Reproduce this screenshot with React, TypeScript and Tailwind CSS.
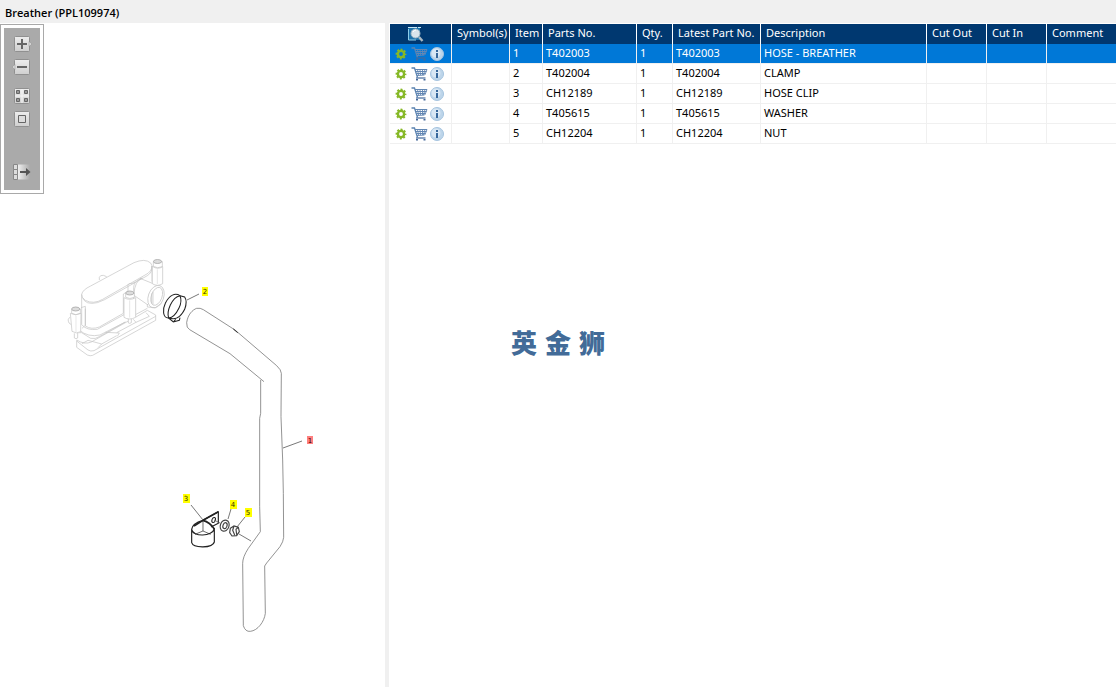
import React from "react";

type Part = { item: number; partNo: string; qty: number; latest: string; description: string };

const parts: Part[] = [
  { item: 1, partNo: "T402003", qty: 1, latest: "T402003", description: "HOSE - BREATHER" },
  { item: 2, partNo: "T402004", qty: 1, latest: "T402004", description: "CLAMP" },
  { item: 3, partNo: "CH12189", qty: 1, latest: "CH12189", description: "HOSE CLIP" },
  { item: 4, partNo: "T405615", qty: 1, latest: "T405615", description: "WASHER" },
  { item: 5, partNo: "CH12204", qty: 1, latest: "CH12204", description: "NUT" },
];

const headings = ["Symbol(s)", "Item", "Parts No.", "Qty.", "Latest Part No.", "Description", "Cut Out", "Cut In", "Comment"];

function ToolIcon({ children }: { children: React.ReactNode }) {
  return (
    <svg viewBox="0 0 20 18" className="block h-[18px] w-5" aria-hidden="true">
      <defs>
        <linearGradient id="face" x1="0" y1="0" x2="0" y2="1">
          <stop offset="0" stopColor="#ededed" />
          <stop offset="1" stopColor="#cfcfcf" />
        </linearGradient>
        <linearGradient id="fade" x1="0" y1="0" x2="1" y2="0">
          <stop offset="0" stopColor="#efefef" />
          <stop offset="1" stopColor="#aaaaaa" />
        </linearGradient>
      </defs>
      {children}
    </svg>
  );
}

const Face = () => <rect x="2.5" y="1.5" width="15" height="15" rx="1" fill="url(#face)" stroke="#909090" />;

function ToolButton({ label, children }: { label: string; children: React.ReactNode }) {
  return (
    <button type="button" aria-label={label} className="block">
      <ToolIcon>{children}</ToolIcon>
    </button>
  );
}

function Toolbar() {
  return (
    <div className="absolute top-px left-0 border border-[#a9a9a9] bg-white p-[3px]">
      <div className="flex flex-col items-center bg-[#aaaaaa] px-2 pt-[7px] pb-[9px]">
        <div className="flex flex-col gap-[5px]">
          <ToolButton label="Zoom in">
            <Face />
            <path d="M17 6.5 20 9l-3 2.500z" fill="#dedede" stroke="#888" strokeWidth=".5" />
            <path d="M10 4v10M5 9h10" stroke="#666" strokeWidth="2" />
          </ToolButton>
          <ToolButton label="Zoom out">
            <Face />
            <path d="M3 6.500 0 9l3 2.500z" fill="#dedede" stroke="#888" strokeWidth=".5" />
            <path d="M5 9h10" stroke="#666" strokeWidth="2" />
          </ToolButton>
        </div>
        <div className="mt-[11px] flex flex-col gap-[5px]">
          <ToolButton label="Show tiles">
            <Face />
            <path d="M10 2v14M3 9h14" stroke="#f5f5f5" strokeWidth="1" />
            <path d="M4.500 3.500h3v3h-3zM12.500 3.500h3v3h-3zM4.500 11.500h3v3h-3zM12.500 11.500h3v3h-3z" fill="#999" stroke="#666" />
          </ToolButton>
          <ToolButton label="Fit to window">
            <Face />
            <path d="M6.500 5.500h7v7h-7z" fill="#ddd" stroke="#666" />
          </ToolButton>
        </div>
        <div className="mt-[35px]">
          <ToolButton label="Hide list">
            <path d="M6 1.500h12v15H6z" fill="url(#fade)" />
            <path d="M1.500 1.500h4v5h-4zM1.500 6.500h4v5h-4zM1.500 11.500h4v5h-4z" fill="#ddd" stroke="#888" />
            <path d="M8 9h8" stroke="#555" strokeWidth="2" />
            <path d="m14 5 4.500 4-4.500 4z" fill="#555" />
          </ToolButton>
        </div>
      </div>
    </div>
  );
}

function Callout({ x, y, n, selected }: { x: number; y: number; n: number; selected?: boolean }) {
  return (
    <g>
      <rect x={x} y={y} width={n < 3 ? 6 : 7} height={n === 1 ? 8 : 9} fill={selected ? "#ff7f7f" : "#ffff00"} />
      <text x={x + 3} y={y + 7} textAnchor="middle" fontSize="7" fontFamily="DejaVu Sans, sans-serif" fill={selected ? "#300" : "#333300"}>
        {n}
      </text>
    </g>
  );
}

function Drawing() {
  return (
    <svg viewBox="0 23 385 664" className="block w-full" role="img" aria-label="Breather exploded view" fill="none">
      {/* breather housing */}
      <g transform="translate(60 250) scale(.33333)" stroke="#c4c4c4" strokeWidth="2.100" strokeLinejoin="round">
        <path d="M65 133Q68 119 92 108L222 38Q255 24 272 39Q283 54 264 70L128 148Q100 164 76 151Q64 144 65 133V224" />
        <path d="M68 143Q76 166 112 158L134 149 262 77Q277 68 276 48V95" />
        <path d="M76 176V228Q94 240 118 231L190 190" />
        <path d="M65 224Q80 242 112 238L192 194M57 240Q85 263 120 255L196 216" />
        <path d="M118 90V82Q120 75 130 76L140 80" />
        <path d="M204 103V125M190 132V190M190 132L204 124M206 101Q218 102 226 96M221 148V112Q222 96 236 89L248 84" />
        <path d="M240 85 292 106M222 136 264 165M246 84Q224 94 222 132" />
        <ellipse cx="288" cy="140" rx="23" ry="35" transform="rotate(20 288 140)" fill="white" />
        <ellipse cx="290" cy="139" rx="16" ry="28" transform="rotate(20 290 139)" />
        <path d="M275 130V160M279 125V164M262 162V171L286 173 304 160" />
        {/* mounting plate */}
        <path d="M228 201 262 181 287 195V211L98 316Q91 319 82 315L50 292V271M50 273 84 300Q92 305 102 302L287 199M66 281 84 271 125 282 114 293M125 282 170 257M136 247 178 249 172 259M170 248 228 217 220 208M228 217 268 199 258 188" />
        <path d="M50 270Q74 285 94 276L205 213M36 240Q50 252 65 248L92 265Q106 268 118 260L196 216M30 202Q21 207 27 219L34 224" />
        <path d="M63 173 76 169V226L66 235M228 193 262 175M218 190 228 196" />
        {/* bolts */}
        <path d="M280 35V49Q292 57 307 50V35Q292 27 280 35Q292 43 307 35M277 49V101Q292 111 308 101V50Q293 60 277 49" fill="white" />
        <path d="M197 129V142Q209 149 223 142V129Q209 120 197 129Q209 137 223 129M192 143V202Q208 212 227 202V143Q209 153 192 143M205 207V219Q209 222 214 218V207" fill="white" />
        <path d="M35 177V190Q47 198 61 190V177Q47 167 35 177Q47 186 61 177M31 190 36 244Q49 253 62 245L63 190Q48 199 31 190M43 250V264Q48 268 53 264V249" fill="white" />
        <path d="M292 58V102M209 151V203M48 198V246M290 29V34M209 123V128" stroke="#dddddd" />
      </g>
      <g stroke="#aaaaaa" fill="#dddddd" strokeWidth=".8">
        <ellipse cx="157.500" cy="261.500" rx="4" ry="2" />
        <ellipse cx="129.800" cy="293" rx="4" ry="2" />
        <ellipse cx="75.700" cy="309" rx="4" ry="2" />
      </g>

      {/* clamp */}
      <g transform="translate(60 250) scale(.33333)" stroke="#222" strokeWidth="3.200">
        <path d="M326 204C308 205 307 178 316 160C328 134 346 128 360 137L374 141Q383 154 374 178C363 201 345 211 326 204" />
        <path d="M326 204C319 185 335 142 360 137Q367 153 357 174C347 195 337 203 326 204M326 204 340 216 358 211 360 203M340 216 347 208" />
      </g>

      {/* hose */}
      <g transform="translate(175 280) scale(.33333)" stroke="#777" strokeWidth="2.400">
        <path d="M267 305 165 221 44 149Q34 144 35 128C38 104 53 89 65 85Q76 83 85 89L180 150 305 257Q319 270 319 280L318 410 323 540M257 300V400L254 415V540" />
        <path d="M175 147 188 158" stroke="#222" strokeWidth="3" />
      </g>
      <g transform="translate(220 430) scale(.33333)" stroke="#777" strokeWidth="2.400">
        <path d="M119 90 119 230 121 305 85 355Q68 381 68 400L70 587Q76 606 91 604C113 602 133 575 136 550L134 408 140 399 180 350Q190 335 191 322L190 190 188 90" />
      </g>

      {/* hose clip, washer and nut */}
      <g transform="translate(170 480) scale(.33333)">
        <g stroke="#222" strokeWidth="3.500" strokeLinejoin="round">
          <path d="M65 148V188C70 205 128 205 133 186V146C128 170 68 172 65 148C66 135 79 127 99 121L145 95V130L123 141" />
          <path d="M99 121Q120 127 133 147M72 138 99 121 145 95" strokeWidth="5" />
          <path d="M99 121V153L75 163M99 153 122 163" strokeWidth="2" />
          <ellipse cx="131" cy="120" rx="5" ry="8" transform="rotate(20 131 120)" strokeWidth="3" />
        </g>
        <g stroke="#444" strokeWidth="3.500">
          <ellipse cx="164" cy="137" rx="13" ry="17" transform="rotate(20 164 137)" />
          <ellipse cx="165" cy="137" rx="6" ry="9" transform="rotate(20 165 137)" />
          <path d="M181 145 192 138 205 142 208 155 200 167 186 168 179 158ZM192 138 188 151 194 165M205 142 198 148 200 164" />
        </g>
      </g>

      <path d="M187 300 199 294M283 448 302 441M191 505 203 520M231 509 228 519M245 517 237 527M239 534 251 541M214 520 220 523" stroke="#555" strokeWidth=".8" />
      <Callout x={202} y={287} n={2} />
      <Callout x={307} y={436} n={1} selected />
      <Callout x={183} y={494} n={3} />
      <Callout x={230} y={500} n={4} />
      <Callout x={245} y={508} n={5} />
    </svg>
  );
}

function GearIcon() {
  return (
    <svg viewBox="0 0 12 12" className="block size-3" aria-hidden="true">
      <circle cx="6" cy="6" r="3.100" fill="none" stroke="#86b826" strokeWidth="2.400" />
      <circle cx="6" cy="6" r="4.500" fill="none" stroke="#86b826" strokeWidth="1.800" strokeDasharray="2 1.534" strokeDashoffset="1" />
    </svg>
  );
}

function CartIcon() {
  return (
    <svg viewBox="0 0 17 14" className="block h-[14px] w-[17px]" fill="none" aria-hidden="true">
      <path d="M.500 1H3.500L6.500 10.500" stroke="#5a82b0" strokeWidth="1.300" />
      <path d="M4 2.500H16M5 4.500H15.500M5.500 6.500H14.500M6 8.500 13.500 8" stroke="#6387b3" />
      <path d="M6.500 2.500 7.500 8M9 2.500 9.500 8M11.500 2.500V8M14 2.500 12.500 8M16 2.500 13.800 8" stroke="#6387b3" strokeWidth=".9" />
      <path d="M5 11H14.500" stroke="#44689a" strokeWidth="1.200" />
      <path d="M5 12h2v1.500H5zM12.500 12h2v1.500h-2z" fill="#44689a" />
    </svg>
  );
}

function InfoIcon() {
  return (
    <svg viewBox="0 0 14 14" className="block size-[14px]" aria-hidden="true">
      <circle cx="7" cy="7" r="6.500" fill="#bdd5ea" stroke="#a5c3de" />
      <circle cx="6" cy="6" r="4.500" fill="#d8e7f4" />
      <path d="M6 3h2v2H6zM6 6h2v5H6z" fill="#37689c" />
    </svg>
  );
}

function PreviewIcon() {
  return (
    <svg viewBox="0 0 17 17" className="block size-[17px]" fill="none" aria-hidden="true">
      <path d="M1 1h12v13H1z" fill="#1d72aa" />
      <path d="M1 1.500h13" stroke="#c7e7f6" strokeDasharray="9 1" />
      <path d="M1.500 3v11H9" stroke="#8ecce9" />
      <circle cx="8.500" cy="7.500" r="4.500" fill="#d8e4eb" stroke="#9bb5c4" />
      <path d="M6 6q1-2 3-2" stroke="white" />
      <path d="m12 11 3.500 4" stroke="#a9b8c2" strokeWidth="2.400" />
    </svg>
  );
}

function PartsTable() {
  return (
    <table className="w-full table-fixed border-separate border-spacing-0 text-left">
      <colgroup>
        <col className="w-[62px]" />
        <col className="w-[58px]" />
        <col className="w-[33px]" />
        <col className="w-[94px]" />
        <col className="w-[36px]" />
        <col className="w-[88px]" />
        <col className="w-[166px]" />
        <col className="w-[60px]" />
        <col className="w-[60px]" />
        <col />
      </colgroup>
      <thead className="bg-[#003870] text-white">
        <tr className="h-5">
          <th className="border-r border-white p-0">
            <button type="button" aria-label="Preview" className="ml-[17px] block">
              <PreviewIcon />
            </button>
          </th>
          {headings.map((h) => (
            <th key={h} className="border-r border-white p-0 pl-[5px] align-top font-normal whitespace-nowrap last:border-r-0">
              {h}
            </th>
          ))}
        </tr>
      </thead>
      <tbody>
        {parts.map((p) => (
          <tr
            key={p.item}
            className="h-5 align-top first:bg-[#0078d7] first:text-white [&>td]:border-r [&>td]:border-b [&>td]:border-[#f0f0f0] [&>td]:p-0 [&>td]:pl-[3px] [&>td:last-child]:border-r-0"
          >
            <td>
              <div className="flex h-[19px] items-center gap-1 pl-0.5">
                <button type="button" aria-label="Options"><GearIcon /></button>
                <button type="button" aria-label="Add to cart"><CartIcon /></button>
                <button type="button" aria-label="Information" className="-ml-0.5"><InfoIcon /></button>
              </div>
            </td>
            <td />
            <td>{p.item}</td>
            <td>{p.partNo}</td>
            <td>{p.qty}</td>
            <td>{p.latest}</td>
            <td>{p.description}</td>
            <td />
            <td />
            <td />
          </tr>
        ))}
      </tbody>
    </table>
  );
}

export default function App() {
  return (
    <div className="relative flex min-h-screen flex-col bg-white font-['Noto_Sans',sans-serif] text-[11px] leading-[17px] text-black">
      <header className="flex h-[23px] items-center bg-[#f0f0f0] px-[5px] pt-0.5">
        <h1 className="font-['Open_Sans',sans-serif] text-[11px] font-semibold">Breather (PPL109974)</h1>
      </header>
      <main className="flex flex-1">
        <section className="relative w-[385px] shrink-0">
          <Drawing />
          <Toolbar />
        </section>
        <div className="w-1 shrink-0 bg-[#f0f0f0]" />
        <section className="min-w-0 flex-1 pt-px pl-px">
          <PartsTable />
        </section>
      </main>
      <div className="pointer-events-none absolute inset-0 flex items-center justify-center gap-2 pb-1 font-['Noto_Sans_CJK_SC',sans-serif] text-[26px] leading-none font-black text-[#426b98]">
        <span>英</span>
        <span>金</span>
        <span>狮</span>
      </div>
    </div>
  );
}
